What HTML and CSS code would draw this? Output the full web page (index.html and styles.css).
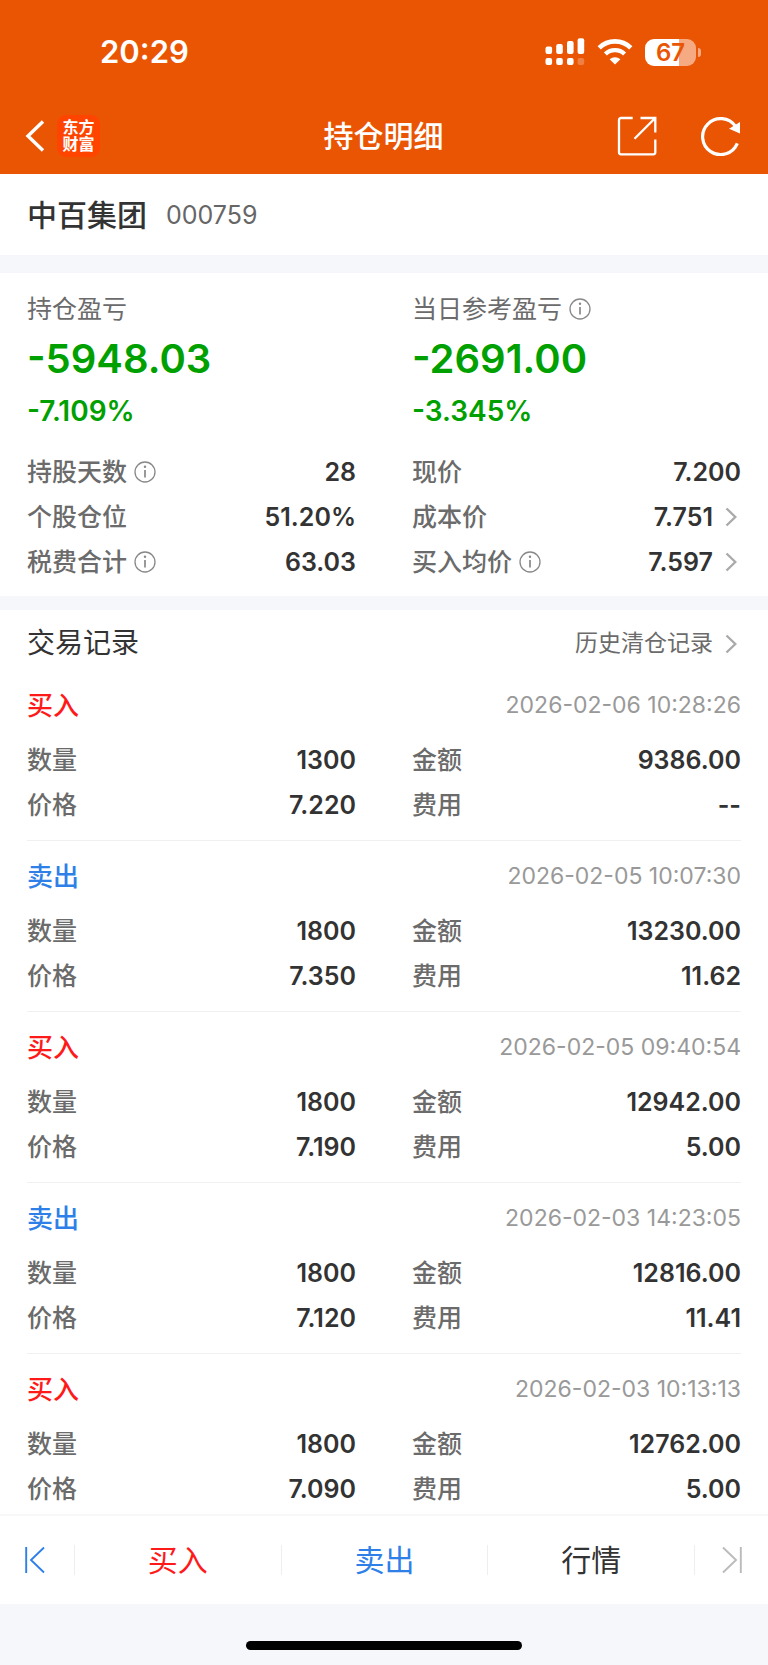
FILE: index.html
```
<!DOCTYPE html>
<html lang="zh-CN">
<head>
  <meta charset="UTF-8" />
  <meta name="viewport" content="width=device-width, initial-scale=1" />
  <title>持仓明细</title>
  <link rel="stylesheet" href="styles.css">
</head>
<body>
  <svg class="symbols" aria-hidden="true">
    <symbol id="info" viewBox="0 0 22 22">
      <circle cx="11" cy="11" r="10" fill="none" stroke="currentColor" stroke-width="1.3" />
      <path d="M11 9v7.5" stroke="currentColor" stroke-width="1.7" />
      <circle cx="11" cy="5.8" r="1.2" fill="currentColor" />
    </symbol>
    <symbol id="arrow" viewBox="0 0 12 20">
      <path d="M1.5 1.5L10.3 10L1.5 18.5" fill="none" stroke="currentColor" stroke-width="2.4" />
    </symbol>
  </svg>

  <header class="header">
    <div class="status">
      <span class="time">20:29</span>
      <div class="status-icons">
        <svg width="40" height="28" viewBox="0 0 40 28" fill="#fff">
          <rect x="0.5" y="8.5" width="6.6" height="7.5" rx="2" />
          <rect x="11.2" y="6" width="6.6" height="10" rx="2" />
          <rect x="22" y="3" width="6.6" height="13" rx="2" />
          <rect x="32.6" y="0.2" width="6.6" height="15.8" rx="2" />
          <rect x="0.5" y="20" width="6.6" height="7" rx="2" />
          <rect x="11.2" y="20" width="6.6" height="7" rx="2" />
          <rect x="22" y="20" width="6.6" height="7" rx="2" />
          <rect x="32.6" y="20" width="6.6" height="7" rx="2" opacity="0.25" />
        </svg>
        <svg width="36" height="26" viewBox="0 0 36 26">
          <path d="M2.2 8.8a22.6 22.6 0 0 1 31.6 0" fill="none" stroke="#fff" stroke-width="4.6" />
          <path d="M8.4 15a13.9 13.9 0 0 1 19.2 0" fill="none" stroke="#fff" stroke-width="4.4" />
          <path d="M18 25.6L12.6 20.3a7.8 7.8 0 0 1 10.8 0z" fill="#fff" />
        </svg>
        <div class="battery"><span class="battery-body">67</span><span class="battery-tip"></span></div>
      </div>
    </div>
    <div class="titlebar">
      <div class="title-side">
        <button class="icon-btn" aria-label="返回">
          <svg width="20" height="32" viewBox="0 0 20 32" fill="none" stroke="#fff" stroke-width="3.4"><path d="M18 1.5L3 16L18 30.5" /></svg>
        </button>
        <a class="logo" href="#">东方<br>财富</a>
      </div>
      <h1>持仓明细</h1>
      <div class="title-side title-right">
        <button class="icon-btn" aria-label="分享">
          <svg width="40" height="40" viewBox="0 0 40 40" fill="none" stroke="#fff" stroke-width="2.3">
            <path d="M15.7 2H4a2 2 0 0 0-2 2v32.3a2 2 0 0 0 2 2h32.3a2 2 0 0 0 2-2V23.5" />
            <path d="M23.5 2H38.3V16.5M37.5 2.8L17.5 22.8" />
          </svg>
        </button>
        <button class="icon-btn" aria-label="刷新">
          <svg width="42" height="40" viewBox="0 0 42 40">
            <path d="M37.3 27.4A18 18 0 1 1 35.5 10.5" fill="none" stroke="#fff" stroke-width="3.2" />
            <path d="M40 6v11.5L29 12.8z" fill="#fff" />
          </svg>
        </button>
      </div>
    </div>
  </header>

  <main>
    <section class="stock">
      <h2>中百集团</h2>
      <span class="code">000759</span>
    </section>

    <section class="summary">
      <div class="col">
        <div class="label">持仓盈亏</div>
        <div class="profit">-5948.03</div>
        <div class="percent">-7.109%</div>
        <dl>
          <div class="row"><dt>持股天数<svg class="info"><use href="#info" /></svg></dt><dd>28</dd></div>
          <div class="row"><dt>个股仓位</dt><dd>51.20%</dd></div>
          <div class="row"><dt>税费合计<svg class="info"><use href="#info" /></svg></dt><dd>63.03</dd></div>
        </dl>
      </div>
      <div class="col">
        <div class="label">当日参考盈亏<svg class="info"><use href="#info" /></svg></div>
        <div class="profit">-2691.00</div>
        <div class="percent">-3.345%</div>
        <dl>
          <div class="row"><dt>现价</dt><dd>7.200</dd></div>
          <div class="row"><dt>成本价</dt><dd>7.751<svg class="arrow"><use href="#arrow" /></svg></dd></div>
          <div class="row"><dt>买入均价<svg class="info"><use href="#info" /></svg></dt><dd>7.597<svg class="arrow"><use href="#arrow" /></svg></dd></div>
        </dl>
      </div>
    </section>

    <section class="records">
      <div class="records-head">
        <h2>交易记录</h2>
        <a href="#">历史清仓记录<svg class="arrow"><use href="#arrow" /></svg></a>
      </div>

      <article class="record">
        <div class="record-head"><h3 class="buy">买入</h3><time>2026-02-06 10:28:26</time></div>
        <dl class="grid">
          <div class="row"><dt>数量</dt><dd>1300</dd></div>
          <div class="row"><dt>金额</dt><dd>9386.00</dd></div>
          <div class="row"><dt>价格</dt><dd>7.220</dd></div>
          <div class="row"><dt>费用</dt><dd>--</dd></div>
        </dl>
      </article>

      <article class="record">
        <div class="record-head"><h3 class="sell">卖出</h3><time>2026-02-05 10:07:30</time></div>
        <dl class="grid">
          <div class="row"><dt>数量</dt><dd>1800</dd></div>
          <div class="row"><dt>金额</dt><dd>13230.00</dd></div>
          <div class="row"><dt>价格</dt><dd>7.350</dd></div>
          <div class="row"><dt>费用</dt><dd>11.62</dd></div>
        </dl>
      </article>

      <article class="record">
        <div class="record-head"><h3 class="buy">买入</h3><time>2026-02-05 09:40:54</time></div>
        <dl class="grid">
          <div class="row"><dt>数量</dt><dd>1800</dd></div>
          <div class="row"><dt>金额</dt><dd>12942.00</dd></div>
          <div class="row"><dt>价格</dt><dd>7.190</dd></div>
          <div class="row"><dt>费用</dt><dd>5.00</dd></div>
        </dl>
      </article>

      <article class="record">
        <div class="record-head"><h3 class="sell">卖出</h3><time>2026-02-03 14:23:05</time></div>
        <dl class="grid">
          <div class="row"><dt>数量</dt><dd>1800</dd></div>
          <div class="row"><dt>金额</dt><dd>12816.00</dd></div>
          <div class="row"><dt>价格</dt><dd>7.120</dd></div>
          <div class="row"><dt>费用</dt><dd>11.41</dd></div>
        </dl>
      </article>

      <article class="record">
        <div class="record-head"><h3 class="buy">买入</h3><time>2026-02-03 10:13:13</time></div>
        <dl class="grid">
          <div class="row"><dt>数量</dt><dd>1800</dd></div>
          <div class="row"><dt>金额</dt><dd>12762.00</dd></div>
          <div class="row"><dt>价格</dt><dd>7.090</dd></div>
          <div class="row"><dt>费用</dt><dd>5.00</dd></div>
        </dl>
      </article>
    </section>
  </main>

  <footer>
    <nav class="actions">
      <button class="step sell" aria-label="上一只">
        <svg width="20" height="28" viewBox="0 0 20 28" fill="none" stroke="currentColor" stroke-width="1.9"><path d="M1.2 1v26M19 1.5L6 14l13 12.5" /></svg>
      </button>
      <button class="action buy">买入</button>
      <button class="action sell">卖出</button>
      <button class="action">行情</button>
      <button class="step next" aria-label="下一只">
        <svg width="20" height="28" viewBox="0 0 20 28" fill="none" stroke="currentColor" stroke-width="1.9"><path d="M18.8 1v26M1 1.5L14 14L1 26.5" /></svg>
      </button>
    </nav>
    <div class="home"><span></span></div>
  </footer>
</body>
</html>
```
FILE: styles.css
```
* {
  box-sizing: border-box;
}
body {
  margin: 0;
  background: #f5f7fa;
  color: #333;
  font-family: Inter, "Noto Sans CJK SC", sans-serif;
  font-size: 25px;
  line-height: 1.2;
}
h1, h2, h3, dl, dd {
  margin: 0;
  font-weight: 500;
}
button {
  padding: 0;
  border: 0;
  background: none;
  color: inherit;
  font: inherit;
}
a {
  color: inherit;
  text-decoration: none;
}
svg {
  display: block;
  flex: none;
}
.symbols {
  position: absolute;
  width: 0;
  height: 0;
}
.buy {
  color: #ff1a1a;
}
.sell {
  color: #2e80e8;
}

/* header */
.header {
  padding-bottom: 6px;
  background: #ea5504;
  color: #fff;
}
.status {
  display: flex;
  justify-content: space-between;
  align-items: center;
  height: 104px;
  padding: 0 67px 0 100px;
}
.time {
  font-size: 31px;
  font-weight: 600;
}
.status-icons {
  display: flex;
  align-items: center;
  gap: 12px;
}
.battery {
  display: flex;
  align-items: center;
  gap: 2px;
}
.battery-body {
  width: 51px;
  border-radius: 9px;
  background: linear-gradient(90deg, #fff 67%, #f5aa81 67%);
  color: #ea5504;
  font-size: 24px;
  font-weight: 600;
  line-height: 27px;
  text-align: center;
}
.battery-tip {
  width: 3px;
  height: 9px;
  border-radius: 0 4px 4px 0;
  background: #f5aa81;
}
.titlebar {
  display: flex;
  align-items: center;
  height: 64px;
  padding: 0 26px 0 25px;
}
.titlebar h1 {
  font-size: 30px;
}
.title-side {
  display: flex;
  flex: 1;
  align-items: center;
  gap: 12px;
}
.title-right {
  justify-content: flex-end;
  gap: 43px;
}
.logo {
  width: 43px;
  height: 42px;
  padding-top: 4px;
  border-radius: 9px;
  background: #ff4400;
  font-size: 16px;
  font-weight: 700;
  line-height: 17px;
  text-align: center;
}

/* stock and position */
.stock {
  display: flex;
  align-items: center;
  gap: 19px;
  height: 81px;
  padding: 0 27px;
  background: #fff;
}
.stock h2 {
  font-size: 30px;
}
.code {
  color: #666;
}
.summary {
  display: grid;
  grid-template-columns: 1fr 1fr;
  gap: 56px;
  margin: 18px 0 14px;
  padding: 20px 27px 12px;
  background: #fff;
}
.label {
  display: flex;
  align-items: center;
  height: 32px;
  margin-bottom: 8px;
  color: #6b6b6b;
}
.profit {
  margin-bottom: 8px;
  color: #00a000;
  font-size: 40px;
  font-weight: 600;
  line-height: 52px;
}
.percent {
  margin-bottom: 20px;
  color: #00a000;
  font-size: 28px;
  font-weight: 600;
  line-height: 36px;
}
.row {
  display: flex;
  justify-content: space-between;
  align-items: center;
  height: 45px;
}
.row dt {
  display: flex;
  align-items: center;
  color: #6b6b6b;
}
.row dd {
  display: flex;
  align-items: center;
  font-weight: 600;
}
.info {
  width: 22px;
  height: 22px;
  margin-left: 7px;
  color: #888;
}
.arrow {
  width: 12px;
  height: 20px;
  margin: 0 4px 0 12px;
  color: #aaa;
}

/* trade records */
.records {
  background: #fff;
}
.records-head {
  display: flex;
  justify-content: space-between;
  align-items: center;
  height: 60px;
  padding: 8px 27px 0;
}
.records-head h2 {
  font-size: 28px;
  font-weight: 400;
}
.records-head a {
  display: flex;
  align-items: center;
  color: #6b6b6b;
  font-size: 23px;
}
.record {
  margin: 0 27px;
  padding: 18px 0 13px;
  border-bottom: 1px solid #f0f0f0;
}
.record:last-child {
  padding-bottom: 3px;
  border-bottom: 0;
}
.record-head {
  display: flex;
  justify-content: space-between;
  align-items: center;
  height: 36px;
  margin-bottom: 13px;
}
.record-head h3 {
  font-size: 26px;
}
.record-head time {
  color: #999;
  font-size: 23px;
}
.grid {
  display: grid;
  grid-template-columns: 1fr 1fr;
  column-gap: 56px;
}

/* bottom bar */
.actions {
  display: flex;
  align-items: center;
  height: 90px;
  border-top: 2px solid #f8f8fa;
  background: #fff;
}
.actions button {
  display: flex;
  justify-content: center;
  align-items: center;
  height: 30px;
}
.step {
  width: 74px;
  padding-right: 4px;
}
.step.next {
  padding: 0;
  color: #bbb;
}
.action {
  flex: 1;
  font-size: 30px;
}
.actions button + button {
  border-left: 1px solid #eee;
}
.home {
  display: flex;
  justify-content: center;
  height: 62px;
  padding-top: 37px;
}
.home span {
  width: 36%;
  height: 9px;
  border-radius: 5px;
  background: #000;
}
```
